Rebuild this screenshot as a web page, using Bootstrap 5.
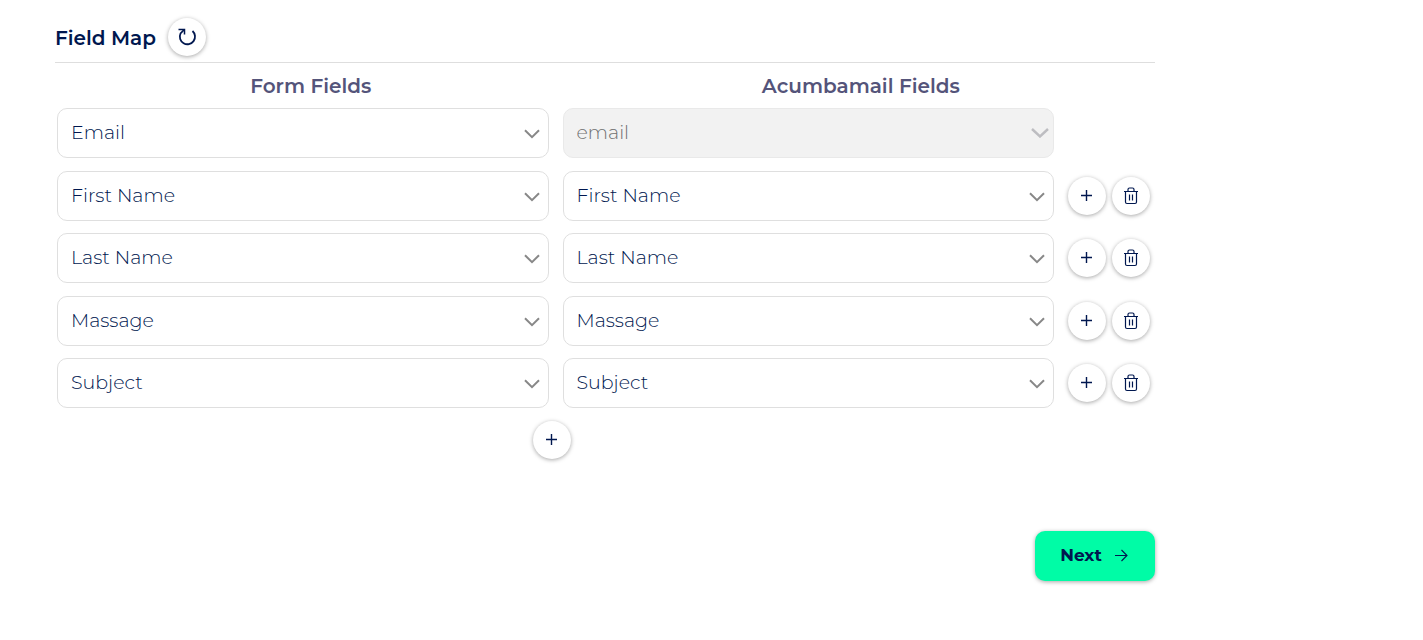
<!DOCTYPE html>
<html lang="en">
<head>
<meta charset="utf-8">
<meta name="viewport" content="width=device-width, initial-scale=1">
<title>Field Map</title>
<link href="https://cdn.jsdelivr.net/npm/bootstrap@5.3.0/dist/css/bootstrap.min.css" rel="stylesheet">
<style>
body { font-family: Montserrat, Inter, "Open Sans", sans-serif; color: #00174f; background: #fff; }
.map-panel { max-width: 1155px; padding: 18px 0 40px 55px; }
.map-title { font-size: 20px; line-height: 24px; font-weight: 600; padding-top: 2px; }
.map-head { border-bottom: 1px solid #dedede; padding-bottom: 6px; }
.map-cols { font-size: 20px; line-height: 24px; font-weight: 600; color: #54547a; padding: 11px 0 10px; }
.map-rows { padding-left: 2px; }
.map-row { display: grid; grid-template-columns: 1fr 1fr 87px; column-gap: 14px; align-items: center; margin-bottom: 12px; }
.map-row:nth-child(odd) { margin-bottom: 13px; }
.map-select.form-select {
  height: 50px; padding: 1px 40px 0 13px; border: 1px solid #dfdfdf; border-radius: 10px;
  font-size: 19px; font-weight: 300; color: #00174f;
  background-image: url("data:image/svg+xml,%3Csvg xmlns='http://www.w3.org/2000/svg' viewBox='0 0 16 10'%3E%3Cpath d='M1 1.2l7 7 7-7' fill='none' stroke='%23888888' stroke-width='2'/%3E%3C/svg%3E");
  background-size: 16px 10px; background-position: right 8px top 20px;
}
.map-select.form-select:disabled {
  background-color: #f2f2f2; border-color: #e9e9e9; color: #707070; opacity: 1;
  background-image: url("data:image/svg+xml,%3Csvg xmlns='http://www.w3.org/2000/svg' viewBox='0 0 18 10'%3E%3Cpath d='M1 1l8 7.5L17 1' fill='none' stroke='%23bdbdc1' stroke-width='2.4'/%3E%3C/svg%3E");
  background-size: 18px 10px; background-position: right 4px top 19px;
}
.round-btn.btn { width: 38px; height: 38px; padding: 0; border: 0; border-radius: 50%; background: #fff; color: #00174f; box-shadow: 0 1px 4px rgba(0,0,0,.35); display: inline-flex; align-items: center; justify-content: center; }
.round-btn svg { display: block; }
.map-actions { gap: 6px; }
.add-line { padding-right: 108px; margin-bottom: 72px; }
.next-btn.btn { width: 120px; height: 50px; border: 0; border-radius: 10px; background: #00fca6; color: #00174f; font-size: 17px; font-weight: 700; box-shadow: 0 1px 4px rgba(0,0,0,.35); padding: 0; }
</style>
</head>
<body>
<svg width="0" height="0" class="position-absolute" aria-hidden="true">
  <symbol id="plus" viewBox="0 0 12 12"><path d="M5.500 0v11M0 5.500h11" fill="none" stroke="currentColor" stroke-width="1.400"/></symbol>
  <symbol id="trash" viewBox="0 0 16 18"><path d="M1 4.500h14M5 4.500V2.500Q5 1 6.500 1h3Q11 1 11 2.500V4.500M2.500 4.500v10.500q0 1.500 1.500 1.500h8q1.500 0 1.500-1.500V4.500M6.500 7.500v6M9.500 7.500v6" fill="none" stroke="currentColor" stroke-width="1.200"/></symbol>
</svg>
<main class="map-panel">
  <header class="map-head d-flex align-items-center gap-2">
    <h1 class="map-title mb-0 me-1">Field Map</h1>
    <button type="button" class="btn round-btn" aria-label="Refresh fields">
      <svg width="20" height="20" viewBox="0 0 20 20" fill="none" stroke="currentColor"><path d="M15.500 4A7.600 7.600 0 1 1 3.500 6.500L6.800 3" stroke-width="1.800"/><path d="M1.500 2.500H7.500V7.500" stroke-width="1.500"/></svg>
    </button>
  </header>
  <div class="map-cols d-flex justify-content-around"><div>Form Fields</div><div>Acumbamail Fields</div></div>
  <div class="map-rows">
    <div class="map-row">
      <select class="form-select map-select" aria-label="Form field 1"><option>Email</option></select>
      <select class="form-select map-select" aria-label="Acumbamail field 1" disabled><option>email</option></select>
    </div>
    <div class="map-row">
      <select class="form-select map-select" aria-label="Form field 2"><option>First Name</option></select>
      <select class="form-select map-select" aria-label="Acumbamail field 2"><option>First Name</option></select>
      <div class="d-flex map-actions"><button type="button" class="btn round-btn" aria-label="Add row"><svg width="12" height="12"><use href="#plus"/></svg></button><button type="button" class="btn round-btn" aria-label="Delete row"><svg width="16" height="18"><use href="#trash"/></svg></button></div>
    </div>
    <div class="map-row">
      <select class="form-select map-select" aria-label="Form field 3"><option>Last Name</option></select>
      <select class="form-select map-select" aria-label="Acumbamail field 3"><option>Last Name</option></select>
      <div class="d-flex map-actions"><button type="button" class="btn round-btn" aria-label="Add row"><svg width="12" height="12"><use href="#plus"/></svg></button><button type="button" class="btn round-btn" aria-label="Delete row"><svg width="16" height="18"><use href="#trash"/></svg></button></div>
    </div>
    <div class="map-row">
      <select class="form-select map-select" aria-label="Form field 4"><option>Massage</option></select>
      <select class="form-select map-select" aria-label="Acumbamail field 4"><option>Massage</option></select>
      <div class="d-flex map-actions"><button type="button" class="btn round-btn" aria-label="Add row"><svg width="12" height="12"><use href="#plus"/></svg></button><button type="button" class="btn round-btn" aria-label="Delete row"><svg width="16" height="18"><use href="#trash"/></svg></button></div>
    </div>
    <div class="map-row">
      <select class="form-select map-select" aria-label="Form field 5"><option>Subject</option></select>
      <select class="form-select map-select" aria-label="Acumbamail field 5"><option>Subject</option></select>
      <div class="d-flex map-actions"><button type="button" class="btn round-btn" aria-label="Add row"><svg width="12" height="12"><use href="#plus"/></svg></button><button type="button" class="btn round-btn" aria-label="Delete row"><svg width="16" height="18"><use href="#trash"/></svg></button></div>
    </div>
    <div class="add-line d-flex justify-content-center"><button type="button" class="btn round-btn" aria-label="Add field pair"><svg width="12" height="12"><use href="#plus"/></svg></button></div>
  </div>
  <div class="d-flex justify-content-end">
    <button type="button" class="btn next-btn d-flex align-items-center justify-content-center gap-2"><span>Next</span>
      <svg width="20" height="14" viewBox="0 0 20 14" fill="none" stroke="currentColor" stroke-width="1.100"><path d="M5 6.500h12M11.500 1L17 6.500 11.500 12"/></svg>
    </button>
  </div>
</main>
<script src="https://cdn.jsdelivr.net/npm/bootstrap@5.3.0/dist/js/bootstrap.bundle.min.js"></script>
</body>
</html>
